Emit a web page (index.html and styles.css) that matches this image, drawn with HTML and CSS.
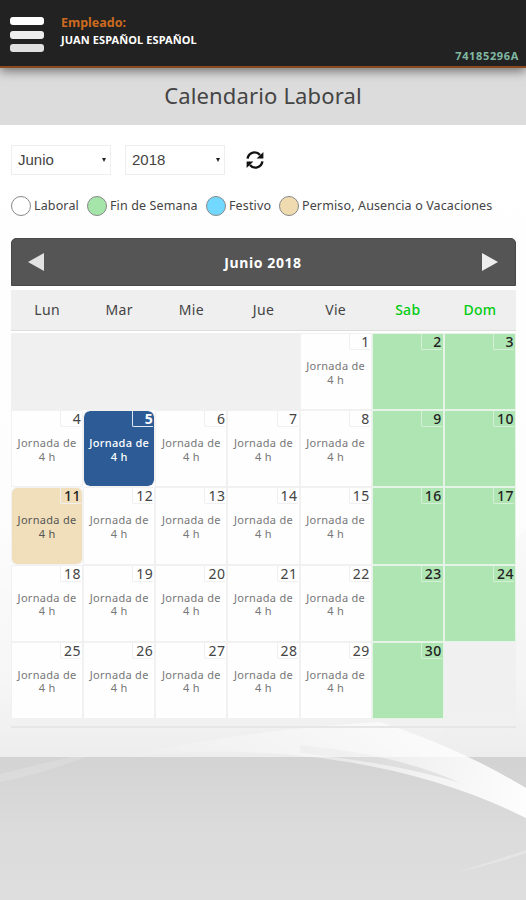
FILE: index.html
```html
<!DOCTYPE html>
<html lang="es">
<head>
    <meta charset="UTF-8">
    <meta name="viewport" content="width=device-width, initial-scale=1.0">
    <title>Calendario Laboral</title>
    <link rel="stylesheet" href="styles.css">
</head>
<body>
    <svg class="waves" viewBox="0 0 526 900" preserveAspectRatio="none">
        <defs>
            <linearGradient id="base" x1="0" y1="0" x2="0" y2="1">
                <stop offset="0" stop-color="#fff"/>
                <stop offset="0.55" stop-color="#fbfbfb"/>
                <stop offset="0.76" stop-color="#e8e8e8"/>
                <stop offset="0.84" stop-color="#d3d3d3"/>
                <stop offset="0.92" stop-color="#dbdbdb"/>
                <stop offset="1" stop-color="#dedede"/>
            </linearGradient>
            <linearGradient id="ribbon" x1="0" y1="0" x2="1" y2="0">
                <stop offset="0" stop-color="#fff" stop-opacity="0"/>
                <stop offset="0.5" stop-color="#fff" stop-opacity="0.45"/>
                <stop offset="1" stop-color="#fff" stop-opacity="0.95"/>
            </linearGradient>
            <linearGradient id="side" x1="0" y1="0" x2="0" y2="1">
                <stop offset="0" stop-color="#ddd" stop-opacity="0.3"/>
                <stop offset="1" stop-color="#ccc" stop-opacity="0.1"/>
            </linearGradient>
        </defs>
        <rect width="526" height="900" fill="url(#base)"/>
        <path d="M526 530 C505 545 490 580 480 640 L440 740 L526 790Z" fill="url(#side)"/>
        <path d="M0 782 Q50 772 90 755 L70 757 Q40 764 0 774Z" fill="#fff" opacity="0.15"/>
        <path d="M120 757 C280 740 420 765 526 818 L526 788 Q460 748 380 722 Q260 728 120 757Z" fill="url(#ribbon)"/>
        <path d="M300 745 Q400 755 460 783 Q400 764 300 753Z" fill="#bbb" opacity="0.3"/>
        <path d="M526 850 Q490 862 455 873 Q495 864 526 853Z" fill="#fff" opacity="0.25"/>
    </svg>

    <header class="header">
        <div class="menu">
            <span></span>
            <span></span>
            <span></span>
        </div>
        <div class="employee">
            <div class="employee-label">Empleado:</div>
            <div class="employee-name">JUAN ESPAÑOL ESPAÑOL</div>
        </div>
        <div class="employee-id">74185296A</div>
    </header>

    <h1 class="title">Calendario Laboral</h1>

    <main class="content">
        <div class="filters">
            <div class="select select-month">Junio<i class="arrow"></i></div>
            <div class="select select-year">2018<i class="arrow"></i></div>
            <svg class="refresh" viewBox="0 0 18 18" width="18" height="18">
                <path d="M1.6 7.6 C2.6 0.8 10.5 -0.4 14 4" fill="none" stroke="#111" stroke-width="2.4"/>
                <path d="M17.4 1 V7.6 H10.6Z" fill="#111"/>
                <path d="M16.4 10.4 C15.4 17.2 7.5 18.4 4 14" fill="none" stroke="#111" stroke-width="2.4"/>
                <path d="M0.6 17 V10.4 H7.4Z" fill="#111"/>
            </svg>
        </div>

        <div class="legend">
            <span class="dot"></span><span class="legend-text l1">Laboral</span>
            <span class="dot green"></span><span class="legend-text l2">Fin de Semana</span>
            <span class="dot blue"></span><span class="legend-text l3">Festivo</span>
            <span class="dot sand"></span><span class="legend-text l4">Permiso, Ausencia o Vacaciones</span>
        </div>

        <div class="calendar">
            <div class="calendar-head">
                <svg width="16" height="18" viewBox="0 0 16 18"><path d="M0 9 L16 0 V18Z" fill="#e2e2e2"/></svg>
                <span>Junio 2018</span>
                <svg width="16" height="18" viewBox="0 0 16 18"><path d="M16 9 L0 0 V18Z" fill="#eee"/></svg>
            </div>
            <div class="weekdays">
                <span>Lun</span>
                <span>Mar</span>
                <span>Mie</span>
                <span>Jue</span>
                <span>Vie</span>
                <span class="weekend-name">Sab</span>
                <span class="weekend-name">Dom</span>
            </div>
            <div class="days" id="days"></div>
        </div>
    </main>

    <script>
        const days = document.getElementById('days');
        const firstDay = 4; // the month starts on a Friday
        const totalDays = 30;
        const today = 5;
        const leave = [11];

        for (let i = 0; i < 35; i++) {
            const number = i - firstDay + 1;
            const cell = document.createElement('div');
            cell.className = 'day';

            if (number < 1 || number > totalDays) {
                cell.classList.add('empty');
            } else {
                const weekend = i % 7 > 4;
                if (weekend) cell.classList.add('weekend');
                if (number === today) cell.classList.add('today');
                if (leave.includes(number)) cell.classList.add('leave');

                cell.innerHTML = '<span class="number">' + number + '</span>';
                if (!weekend) {
                    cell.innerHTML += '<p class="shift">Jornada de<br>4 h</p>';
                }
            }
            days.appendChild(cell);
        }
    </script>
</body>
</html>
```
FILE: styles.css
```css
* {
    box-sizing: border-box;
}
body {
    margin: 0;
    height: 900px;
    overflow: hidden;
    font-family: "Trebuchet MS", "Noto Sans", "Open Sans", sans-serif;
    color: #444;
}
.waves {
    position: absolute;
    top: 0;
    left: 0;
    width: 100%;
    height: 900px;
    z-index: -1;
}
.header {
    position: relative;
    display: flex;
    height: 68px;
    padding: 0 7px 0 10px;
    background-color: #222;
    border-bottom: 2px solid #8a4a1c;
    box-shadow: 0 3px 10px rgba(0, 0, 0, 0.5);
}
.menu {
    display: flex;
    flex-direction: column;
    gap: 5.5px;
    width: 34px;
    padding-top: 17px;
}
.menu span {
    height: 8px;
    border-radius: 3px;
    background-color: #fff;
}
.menu span:nth-child(2) {
    background-color: #eee;
}
.menu span:nth-child(3) {
    background-color: #e0e0e0;
}
.employee {
    flex: 1;
    padding: 14px 0 0 17px;
    font-weight: bold;
}
.employee-label {
    color: #cc6a1f;
    font-size: 12.5px;
    line-height: 18px;
}
.employee-name {
    color: #fff;
    font-size: 11px;
    line-height: 16px;
    letter-spacing: 0.1px;
}
.employee-id {
    align-self: flex-end;
    margin-bottom: 2px;
    color: #80b8a2;
    font-size: 11px;
    font-weight: bold;
    line-height: 16px;
    letter-spacing: 0.65px;
}
.title {
    height: 57px;
    margin: 0;
    background-color: #dcdcdc;
    color: #444;
    font-size: 22px;
    font-weight: normal;
    line-height: 55px;
    letter-spacing: 0.15px;
    text-align: center;
}
.content {
    height: 632px;
    padding: 19px 10px 0 11px;
    background-color: rgba(255, 255, 255, 0.6);
}
.filters {
    display: flex;
    align-items: center;
    height: 31px;
}
.select {
    display: flex;
    align-items: center;
    justify-content: space-between;
    width: 100px;
    height: 30px;
    padding: 0 4px 0 6px;
    border: 1px solid #eee;
    background-color: #fff;
    font-family: "Liberation Sans", Arial, sans-serif;
    font-size: 15px;
}
.select-month {
    margin-right: 14px;
}
.arrow {
    border: 2.5px solid transparent;
    border-top: 4px solid #222;
    border-bottom: 0;
}
.refresh {
    margin-left: 21px;
}
.legend {
    display: flex;
    align-items: center;
    height: 20px;
    margin-top: 21px;
    white-space: nowrap;
}
.dot {
    flex: none;
    width: 20px;
    height: 20px;
    border: 1px solid #888;
    border-radius: 50%;
    background-color: #fff;
}
.green {
    background-color: #a5e5a9;
}
.blue {
    background-color: #72d8ff;
}
.sand {
    background-color: #f0dbb0;
}
.legend-text {
    padding-left: 3px;
    font-size: 12.5px;
    line-height: 20px;
    letter-spacing: 0.13px;
}
.l1 {
    width: 56px;
}
.l2 {
    width: 99px;
}
.l3 {
    width: 53px;
}
.calendar {
    margin-top: 22px;
    padding-bottom: 7px;
    border-bottom: 2px solid #e6e6e6;
}
.calendar-head {
    display: flex;
    align-items: center;
    justify-content: space-between;
    height: 48px;
    padding: 0 17px 0 16px;
    border: 1px solid #484848;
    border-radius: 5px 5px 0 0;
    background-color: #555;
    color: #fff;
    font-size: 14px;
    font-weight: bold;
    letter-spacing: 0.6px;
}
.weekdays {
    display: grid;
    grid-template-columns: repeat(7, 1fr);
    height: 41px;
    margin-top: 4px;
    border-bottom: 1px solid #ddd;
    background-color: #efefef;
    font-size: 14px;
    line-height: 40px;
    letter-spacing: 0.3px;
    text-align: center;
}
.weekend-name {
    color: #0c1;
    font-weight: 500;
}
.days {
    display: grid;
    grid-template-columns: repeat(7, 1fr);
    grid-auto-rows: 77.2px;
    margin-top: 2px;
}
.day {
    position: relative;
    padding-top: 25px;
    border: 1px solid #f1f1f1;
    background-color: #fefefe;
    background-clip: padding-box;
}
.empty {
    border-color: #f0f0f0;
    background-color: #f0f0f0;
}
.number {
    position: absolute;
    top: 0;
    right: 1px;
    width: 21px;
    height: 16px;
    border: 1px solid #f0f0f0;
    border-top: 0;
    border-right: 0;
    border-radius: 0 0 0 2px;
    color: #444;
    font-size: 14px;
    line-height: 16px;
    letter-spacing: 0.5px;
    text-align: right;
}
.shift {
    margin: 0;
    color: #777;
    font-size: 11px;
    line-height: 13.5px;
    letter-spacing: 0.3px;
    text-align: center;
}
.weekend {
    border-color: #e6f4e7;
    background-color: #aee5b2;
}
.weekend .number {
    border-color: #d5f0d7;
    color: #222;
    font-weight: 500;
}
.leave {
    border-radius: 6px;
    background-color: #f0dfba;
}
.leave .number {
    color: #222;
    font-weight: 500;
}
.leave .shift {
    color: #555;
}
.today {
    border-radius: 7px;
    background-color: #2c5b96;
}
.today .number {
    border: 1px solid #dfe8f2;
    border-top: 0;
    border-right: 0;
    color: #fff;
    font-weight: bold;
}
.today .shift {
    color: #fff;
    font-weight: 500;
}
```
